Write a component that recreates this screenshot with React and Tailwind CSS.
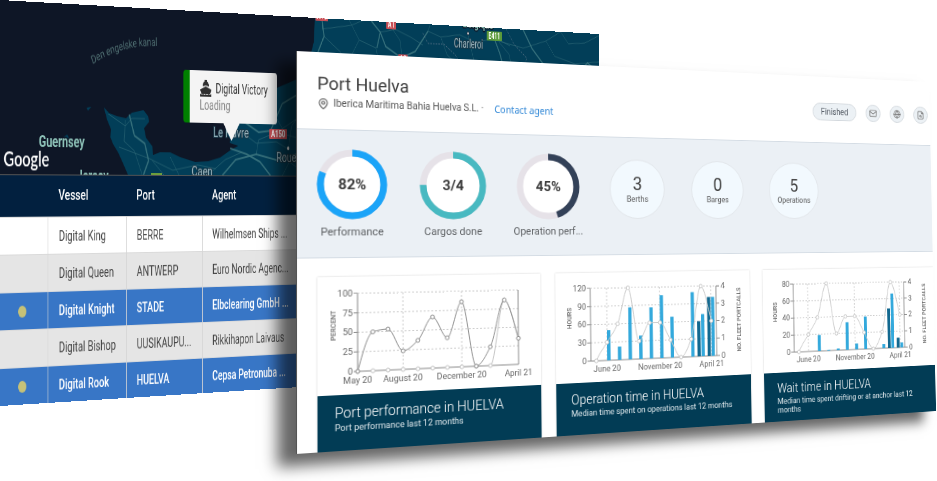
import React from "react";
import { Mail, Globe, FileSearch, MapPin } from "lucide-react";

/* ---------- perspective ---------- */

// Matrix that projects a w × h box onto four corners (tl, tr, br, bl).
function project(w, h, [[x0, y0], [x1, y1], [x2, y2], [x3, y3]]) {
  const dx1 = x1 - x2, dx2 = x3 - x2, sx = x0 - x1 + x2 - x3;
  const dy1 = y1 - y2, dy2 = y3 - y2, sy = y0 - y1 + y2 - y3;
  const det = dx1 * dy2 - dx2 * dy1;
  const g = (sx * dy2 - dx2 * sy) / det;
  const k = (dx1 * sy - sx * dy1) / det;
  const m = [
    (x1 - x0 + g * x1) / w, (y1 - y0 + g * y1) / w, 0, g / w,
    (x3 - x0 + k * x3) / h, (y3 - y0 + k * y3) / h, 0, k / h,
    0, 0, 1, 0,
    x0, y0, 0, 1,
  ];
  return `matrix3d(${m.join(",")})`;
}

const FLEET_CORNERS = [[0, 0], [599, 34], [599, 368], [0, 406]];
const PORT_CORNERS = [[296, 51], [929, 82], [936, 411], [296, 454]];

/* ---------- fleet window ---------- */

const ROADS = [
  "M160 112 L186 124 L196 116 L216 116",
  "M186 118 L184 140 L200 150 L212 175",
  "M192 112 L200 134 L216 142 L222 160 L214 175",
  "M176 146 L200 152 L224 158 L260 170 L300 164 L330 168",
  "M228 160 L246 175 M256 156 L270 175 M316 175 L345 158 L372 150",
  "M340 175 L362 158 L396 152 L430 158 L470 150",
  "M353 146 L380 152 L402 160 L420 175 M396 152 L400 136 L430 128 L470 110",
  "M378 118 L400 128 L420 126 L440 96 L470 84",
  "M372 128 L396 140 L430 138 L450 146 M430 112 L446 130 L470 134",
  "M440 175 L452 160 L470 168 M450 146 L456 120 L480 100",
  "M500 40 L512 20 L508 0 M512 20 L540 36 L552 48 M508 12 L560 6 L580 0",
  "M556 0 L574 22 L604 30 L610 48 M574 22 L560 40",
  "M596 0 L612 12 L622 28 L650 40 L676 32 L700 8 L704 0",
  "M630 4 L648 20 L652 40 M612 12 L640 8 L668 16 L690 24",
  "M700 8 L724 14 L760 10 L790 18 L830 12 L858 20",
  "M724 14 L736 34 L756 46 M776 10 L782 26 L790 46",
  "M836 16 L856 30 L862 48 M812 0 L828 14 L884 22 L930 12 L960 0",
  "M884 0 L902 22 L930 44 M930 12 L948 30 L990 38 L1040 34",
  "M960 0 L976 14 L1010 12 L1040 2 M1000 46 L1016 36 L1040 48",
];
const MAIN_ROADS = [
  "M192 112 L200 134 L216 142 L222 160 L214 175",
  "M340 175 L362 158 L396 152 L430 158 L470 150",
  "M353 146 L380 152 L402 160 L420 175",
  "M378 118 L400 128 L420 126 L440 96 L470 84",
  "M612 12 L622 28 L650 40 L676 32 L700 8",
  "M500 40 L512 20 L508 0",
  "M596 0 L612 12 L606 30",
  "M828 14 L838 30 L846 48",
  "M884 0 L902 22 L930 44",
  "M1000 46 L1016 36 L1040 48",
];

function Badge({ x, y, w, color, children }) {
  return (
    <g>
      <rect x={x} y={y} width={w} height="11" rx="1" fill={color} />
      <text x={x + w / 2} y={y + 9} fontSize="10" fontWeight="700" textAnchor="middle" fill="#fff">
        {children}
      </text>
    </g>
  );
}

function ShipIcon() {
  return (
    <svg viewBox="0 0 20 18" className="h-[18px] w-5" fill="#2f2f2f" aria-hidden="true">
      <path d="M8 0 H12 V2 H13 L15 5 V7 L10 6 L5 7 V5 L7 2 H8 Z" />
      <path d="M10 7 L18 10 Q19 10 19 11 L17 15 H3 L1 11 Q1 10 2 10 Z" />
      <path d="M1 15 Q4 16 6 15 Q8 17 10 15 Q12 17 14 15 Q17 16 19 15 V18 H1 Z" />
    </svg>
  );
}

function MapView() {
  return (
    <div className="relative h-[175px] overflow-hidden bg-[#0e1626]">
      <svg viewBox="0 0 1040 175" className="block h-full w-full" fontFamily="Roboto, sans-serif" aria-label="Map">
        <g fill="#023e58">
          <path d="M153 105 L161 111 L173 114 L187 116 L196 110 L214 107 L221 113 L223 119 L215 126 L218 136 L228 145 L229 154 L240 151 L256 151 L272 156 L296 161 L317 160 L336 156 L353 148 L366 143 L352 140 L353 136 L346 130 L350 118 L378 96 L431 79 L454 72 L464 69 L486 48 L494 27 L496 0 L1040 0 L1040 175 L190 175 L181 161 L175 152 L167 143 L163 136 L164 128 L158 118 Z" />
          <path d="M127 106 L134 105 L129 109 Z M92 137 L98 134 L102 140 L94 143 Z" />
        </g>
        <g fill="none" stroke="#2c6675" strokeWidth="1" strokeOpacity="0.7">
          {ROADS.map((d) => <path key={d} d={d} />)}
        </g>
        <g fill="none" stroke="#3c7680" strokeWidth="2" strokeOpacity="0.8">
          {MAIN_ROADS.map((d) => <path key={d} d={d} />)}
        </g>
        <path d="M690 10 L700 22 L730 22 L752 34 L764 48 M850 0 L866 18 L892 34 L880 48" fill="none" stroke="#6d7f92" strokeDasharray="3 2" strokeOpacity="0.7" />
        <path id="channel" d="M136 61 Q180 39 236 39" fill="none" />
        <text fontSize="12" fill="#4e6d70"><textPath href="#channel">Den engelske kanal</textPath></text>
        <g stroke="#0e1626" strokeWidth="3" paintOrder="stroke" strokeLinejoin="round">
          <text x="56" y="147" fontSize="16" fontWeight="700" fill="#8ec3b9">Guernsey</text>
          <text x="112" y="182" fontSize="16" fontWeight="700" fill="#8ec3b9">Jersey</text>
          <text x="766" y="1" fontSize="15" fontWeight="700" fill="#8ec3b9">Belgique</text>
        </g>
        <g stroke="#1a3646" strokeWidth="2" paintOrder="stroke" fill="#98b4bd" fontSize="15">
          <text x="325" y="134">Le Havre</text>
          <text x="290" y="176">Caen</text>
          <text x="430" y="160">Rouen</text>
          <text x="749" y="25" fontSize="14">Charleroi</text>
        </g>
        <circle cx="450" cy="145" r="2" fill="#fff" />
        <circle cx="776" cy="8" r="2" fill="#fff" stroke="#0e1626" />
        <Badge x={418} y={124} w={30} color="#c84f56">A150</Badge>
        <Badge x={497} y={-8} w={22} color="#c84f56">A16</Badge>
        <Badge x={623} y={-3} w={18} color="#c84f56">A1</Badge>
        <Badge x={645} y={36} w={17} color="#c84f56">A2</Badge>
        <Badge x={812} y={4} w={30} color="#5b9a3a">E411</Badge>
        <rect x="226" y="173" width="17" height="4" fill="#6fa03c" />
        <text x="5" y="167" fontSize="21" fontWeight="600" fill="#fff" fontFamily="Lato, sans-serif">Google</text>
      </svg>
      <div className="absolute left-[277px] top-[63px] flex h-14 w-[154px] flex-col justify-center rounded-sm border-l-[10px] border-[#008000] bg-[#f4f4f4] pl-4 text-sm leading-[18px]">
        <p className="flex items-center gap-1.5 whitespace-nowrap text-[#333]">
          <ShipIcon />
          Digital Victory
        </p>
        <p className="text-[#8a8a8a]">Loading</p>
        <svg viewBox="0 0 28 20" className="absolute left-[54px] top-[55px] h-5 w-7" aria-hidden="true">
          <path d="M0 0 H28 L14 20 Z" fill="#f4f4f4" />
        </svg>
      </div>
    </div>
  );
}

const VESSELS = [
  { vessel: "Digital King", port: "BERRE", agent: "Wilhelmsen Ships ..." },
  { vessel: "Digital Queen", port: "ANTWERP", agent: "Euro Nordic Agenc..." },
  { vessel: "Digital Knight", port: "STADE", agent: "Elbclearing GmbH ...", active: true },
  { vessel: "Digital Bishop", port: "UUSIKAUPU...", agent: "Rikkihapon Laivaus" },
  { vessel: "Digital Rook", port: "HUELVA", agent: "Cepsa Petronuba ...", active: true },
];

function FleetTable() {
  return (
    <table className="w-full table-fixed border-collapse text-left text-sm">
      <colgroup>
        <col className="w-[69px]" />
        <col className="w-[118px]" />
        <col className="w-[120px]" />
        <col />
      </colgroup>
      <thead>
        <tr className="h-[43px] border-t border-[#555] bg-[#02203f] text-[15px] text-white">
          <th aria-label="Status" />
          <th className="p-0 pl-4 font-medium">Vessel</th>
          <th className="p-0 pl-4 font-medium">Port</th>
          <th className="p-0 pl-4 font-medium">Agent</th>
        </tr>
      </thead>
      <tbody>
        {VESSELS.map((v, i) => (
          <tr
            key={v.vessel}
            className={
              v.active
                ? "h-[38px] border-t border-[#d5d8dc] bg-[#3876c6] font-medium text-white"
                : i % 2
                  ? "h-[38px] border-t border-[#dadada] bg-[#e5e5e5] text-[#444]"
                  : "h-[38px] border-t border-[#dadada] bg-white text-[#444]"
            }
          >
            <td className="p-0 pl-[26px]">
              {v.active && <span className="block h-3 w-3 rounded-full bg-[#c5c178]" />}
            </td>
            <td className="border-l border-[#d5d5d5] p-0 pl-4">{v.vessel}</td>
            <td className="border-l border-[#d5d5d5] p-0 pl-4">{v.port}</td>
            <td className="border-l border-[#d5d5d5] p-0 pl-4">{v.agent}</td>
          </tr>
        ))}
      </tbody>
    </table>
  );
}

/* ---------- port window ---------- */

function Gauge({ value, text, label, color }) {
  const r = 32;
  const length = 2 * Math.PI * r;
  return (
    <figure className="flex w-[72px] flex-col items-center">
      <div className="grid h-[72px] w-[72px] place-items-center">
        <svg viewBox="0 0 72 72" className="col-start-1 row-start-1 h-full w-full" aria-hidden="true">
          <circle cx="36" cy="36" r={r} fill="#fff" stroke="#e6e2e8" strokeWidth="7" />
          <circle
            cx="36" cy="36" r={r} fill="none" stroke={color} strokeWidth="7"
            strokeDasharray={`${length * value} ${length}`} transform="rotate(-90 36 36)"
          />
        </svg>
        <span className="col-start-1 row-start-1 text-[15px] font-bold text-[#3a3a3a]">{text}</span>
      </div>
      <figcaption className="mt-[5px] whitespace-nowrap text-[11px] leading-4 text-[#5c5f62]">{label}</figcaption>
    </figure>
  );
}

function Counter({ value, label }) {
  return (
    <div className="flex h-[66px] w-[66px] flex-col items-center justify-center rounded-full border border-[#e2e6ea] bg-[#f2f9fe]">
      <span className="text-xl leading-[22px] text-[#444]">{value}</span>
      <span className="text-[9px] leading-3 text-[#555]">{label}</span>
    </div>
  );
}

// Smooth path through the points, flat at every local extreme.
function monotone(points) {
  const n = points.length;
  const slope = points.slice(1).map((p, i) => (p[1] - points[i][1]) / (p[0] - points[i][0]));
  const tangent = points.map((_, i) => {
    if (i === 0) return slope[0] * 1.4;
    if (i === n - 1) return slope[n - 2] * 1.2;
    const a = slope[i - 1], b = slope[i];
    return a * b <= 0 ? 0 : (2 * a * b) / (a + b);
  });
  let d = `M${points[0][0]} ${points[0][1]}`;
  for (let i = 1; i < n; i++) {
    const [ax, ay] = points[i - 1];
    const [bx, by] = points[i];
    const t = (bx - ax) / 3;
    d += ` C${ax + t} ${ay + t * tangent[i - 1]} ${bx - t} ${by - t * tangent[i]} ${bx} ${by}`;
  }
  return d;
}

const TOP = 17;
const BOTTOM = 96;
const LEFT = 40;
const yAt = (value, max) => BOTTOM - (value / max) * (BOTTOM - TOP);

function Series({ points, color }) {
  return (
    <g stroke={color} fill="none">
      <path d={monotone(points)} />
      {points.map(([x, y]) => <circle key={x} cx={x} cy={y} r="2" fill="#fff" />)}
    </g>
  );
}

function Frame({ right, ticks, months, unit, children }) {
  const max = ticks[ticks.length - 1];
  return (
    <svg viewBox="0 0 235 119" className="block h-[119px] w-[235px]" fontFamily="Roboto, sans-serif" fontSize="9" fill="#666" aria-label={unit}>
      <g stroke="#ccc" strokeDasharray="2 2">
        {ticks.slice(1).map((t) => <path key={t} d={`M${LEFT} ${yAt(t, max)} H${right}`} />)}
        {months.filter((m) => m.grid).map((m) => <path key={m.label} d={`M${m.x} ${TOP} V${BOTTOM}`} />)}
      </g>
      <path d={`M${LEFT} ${TOP} V${BOTTOM} H${right} V${TOP}`} fill="none" stroke="#8a8a8a" />
      {ticks.map((t) => (
        <g key={t}>
          <path d={`M${LEFT - 4} ${yAt(t, max)} H${LEFT}`} stroke="#8a8a8a" />
          <text x={LEFT - 5} y={yAt(t, max) + 3} textAnchor="end">{t}</text>
        </g>
      ))}
      {children}
      {months.map((m) => (
        <text key={m.label} x={m.x} y="108" textAnchor="middle">{m.label}</text>
      ))}
      <text transform="translate(18 49) rotate(-90)" textAnchor="middle" fontSize="7" fontWeight="500">{unit}</text>
    </svg>
  );
}

function PerformanceChart() {
  const x = (i) => LEFT + (170 / 11) * i;
  const current = [0, 50, 53, 24, 37, 67, 39, 86, 0, 25, 87, 35].map((v, i) => [x(i), yAt(v, 100)]);
  const fleet = [0, 0, 0, 0, 0, 0, 0, 0, 0, 0, 87, 35].map((v, i) => [x(i), yAt(v, 100)]);
  const months = [
    { label: "May 20", x: x(0) },
    { label: "August 20", x: x(3), grid: true },
    { label: "December 20", x: x(7), grid: true },
    { label: "April 21", x: x(11) },
  ];
  return (
    <Frame right={210} ticks={[0, 25, 50, 75, 100]} months={months} unit="PERCENT">
      <Series points={fleet} color="#c4c4c4" />
      <Series points={current} color="#8f8f8f" />
    </Frame>
  );
}

const PORTCALLS = [0, 1, 2, 4, 1, 2, 2, 1, 0, 1, 4, 2];

function HoursChart({ ticks, light, dark }) {
  const right = 192;
  const max = ticks[ticks.length - 1];
  const x = (i) => LEFT + ((right - LEFT) / 12) * (i + 0.5);
  const months = [
    { label: "June 20", x: x(1), grid: true },
    { label: "November 20", x: x(6), grid: true },
    { label: "April 21", x: x(11), grid: true },
  ];
  return (
    <Frame right={right} ticks={ticks} months={months} unit="HOURS">
      {[0, 1, 2, 3, 4].map((t) => (
        <g key={t}>
          <path d={`M${right} ${yAt(t, 4)} h4`} stroke="#8a8a8a" />
          <text x={right + 6} y={yAt(t, 4) + 3}>{t}</text>
        </g>
      ))}
      {light.map((v, i) => v > 0 && (
        <rect key={i} x={x(i)} y={yAt(v, max)} width="4" height={BOTTOM - yAt(v, max)} fill="#34a9dc" />
      ))}
      {dark.map((v, i) => v > 0 && (
        <rect key={i} x={x(i) - 5} y={yAt(v, max)} width="4" height={BOTTOM - yAt(v, max)} fill="#12688f" />
      ))}
      <Series points={PORTCALLS.map((v, i) => [x(i), yAt(v, 4)])} color="#c8c8c8" />
      <text transform="translate(223 56) rotate(-90)" textAnchor="middle" fontSize="7" fontWeight="500">NO. FLEET PORTCALLS</text>
    </Frame>
  );
}

function Card({ title, subtitle, children }) {
  return (
    <article className="flex w-[235px] shrink-0 flex-col bg-white shadow-[0_0_2px_rgba(0,0,0,0.2)]">
      {children}
      <div className="flex-1 bg-[#023c55] py-2 pl-[17px] pr-3 text-white">
        <h2 className="whitespace-nowrap text-sm font-light leading-5">{title}</h2>
        <p className="text-[9px] leading-[10px] text-[#dfe8ec]">{subtitle}</p>
      </div>
    </article>
  );
}

function RoundButton({ label, children }) {
  return (
    <button type="button" aria-label={label} className="grid h-[21px] w-[21px] place-items-center rounded-full border border-[#d3d8dd] bg-[#ecf1f5] text-[#777]">
      {children}
    </button>
  );
}

function PortWindow() {
  return (
    <div className="flex h-[403px] w-[760px] flex-col overflow-hidden border-l border-[#555] bg-white">
      <header className="flex h-[78px] justify-between pl-5 pr-[3px]">
        <div className="pt-5">
          <h1 className="text-lg leading-6 text-[#3c3c3c]">Port Huelva</h1>
          <p className="flex h-4 items-center text-[10px] leading-4 text-[#555]">
            <MapPin className="mr-1 h-[13px] w-3" strokeWidth={2} />
            Iberica Maritima Bahia Huelva S.L. ·
            <a href="#agent" className="ml-3 font-['Noto_Sans',sans-serif] text-[#2e86d6]">Contact agent</a>
          </p>
        </div>
        <div className="flex items-center gap-[13px] pt-1">
          <button type="button" className="h-[21px] w-[60px] rounded-full border border-[#d3d8dd] bg-[#ecf1f5] text-[10px] text-[#4f5660]">
            Finished
          </button>
          <RoundButton label="Send message"><Mail className="h-[11px] w-[11px]" /></RoundButton>
          <RoundButton label="Language"><Globe className="h-[11px] w-[11px]" /></RoundButton>
          <RoundButton label="Report"><FileSearch className="h-[11px] w-[11px]" /></RoundButton>
        </div>
      </header>
      <section className="flex h-[131px] items-start border-y border-[#d4dce4] bg-[#ebf0f5] pl-[19px] pt-[19px]">
        <div className="flex gap-[33px]">
          <Gauge value={0.81} text="82%" label="Performance" color="#1ba4f8" />
          <Gauge value={0.75} text="3/4" label="Cargos done" color="#48b9c1" />
          <Gauge value={0.45} text="45%" label="Operation perf..." color="#334158" />
        </div>
        <div className="ml-[35px] mt-[5px] flex gap-[33px]">
          <Counter value="3" label="Berths" />
          <Counter value="0" label="Barges" />
          <Counter value="5" label="Operations" />
        </div>
      </section>
      <section className="flex flex-1 gap-[17px] pl-5 pt-[19px]">
        <Card title="Port performance in HUELVA" subtitle="Port performance last 12 months">
          <PerformanceChart />
        </Card>
        <Card title="Operation time in HUELVA" subtitle="Median time spent on operations last 12 months">
          <HoursChart
            ticks={[0, 30, 60, 90, 120]}
            light={[0, 50, 22, 87, 39, 86, 106, 69, 0, 110, 72, 101]}
            dark={[0, 0, 0, 0, 0, 0, 0, 0, 0, 0, 60, 101]}
          />
        </Card>
        <Card title="Wait time in HUELVA" subtitle="Median time spent drifting or at anchor last 12 months">
          <HoursChart
            ticks={[0, 20, 40, 60, 80]}
            light={[0, 0, 19, 1, 2, 33, 7, 39, 0, 5, 66, 6]}
            dark={[0, 0, 0, 0, 0, 0, 0, 0, 0, 0, 48, 12]}
          />
        </Card>
      </section>
    </div>
  );
}

export default function App() {
  return (
    <main className="relative min-h-screen w-full overflow-hidden bg-white font-[Roboto,sans-serif]">
      <div className="absolute left-0 top-0 h-[408px] w-[1040px] origin-top-left overflow-hidden" style={{ transform: project(1040, 408, FLEET_CORNERS) }}>
        <MapView />
        <FleetTable />
      </div>
      <div
        className="absolute left-0 top-0 origin-top-left shadow-[-18px_12px_14px_rgba(0,0,0,0.6)]"
        style={{ transform: project(760, 403, PORT_CORNERS) }}
      >
        <PortWindow />
      </div>
    </main>
  );
}
